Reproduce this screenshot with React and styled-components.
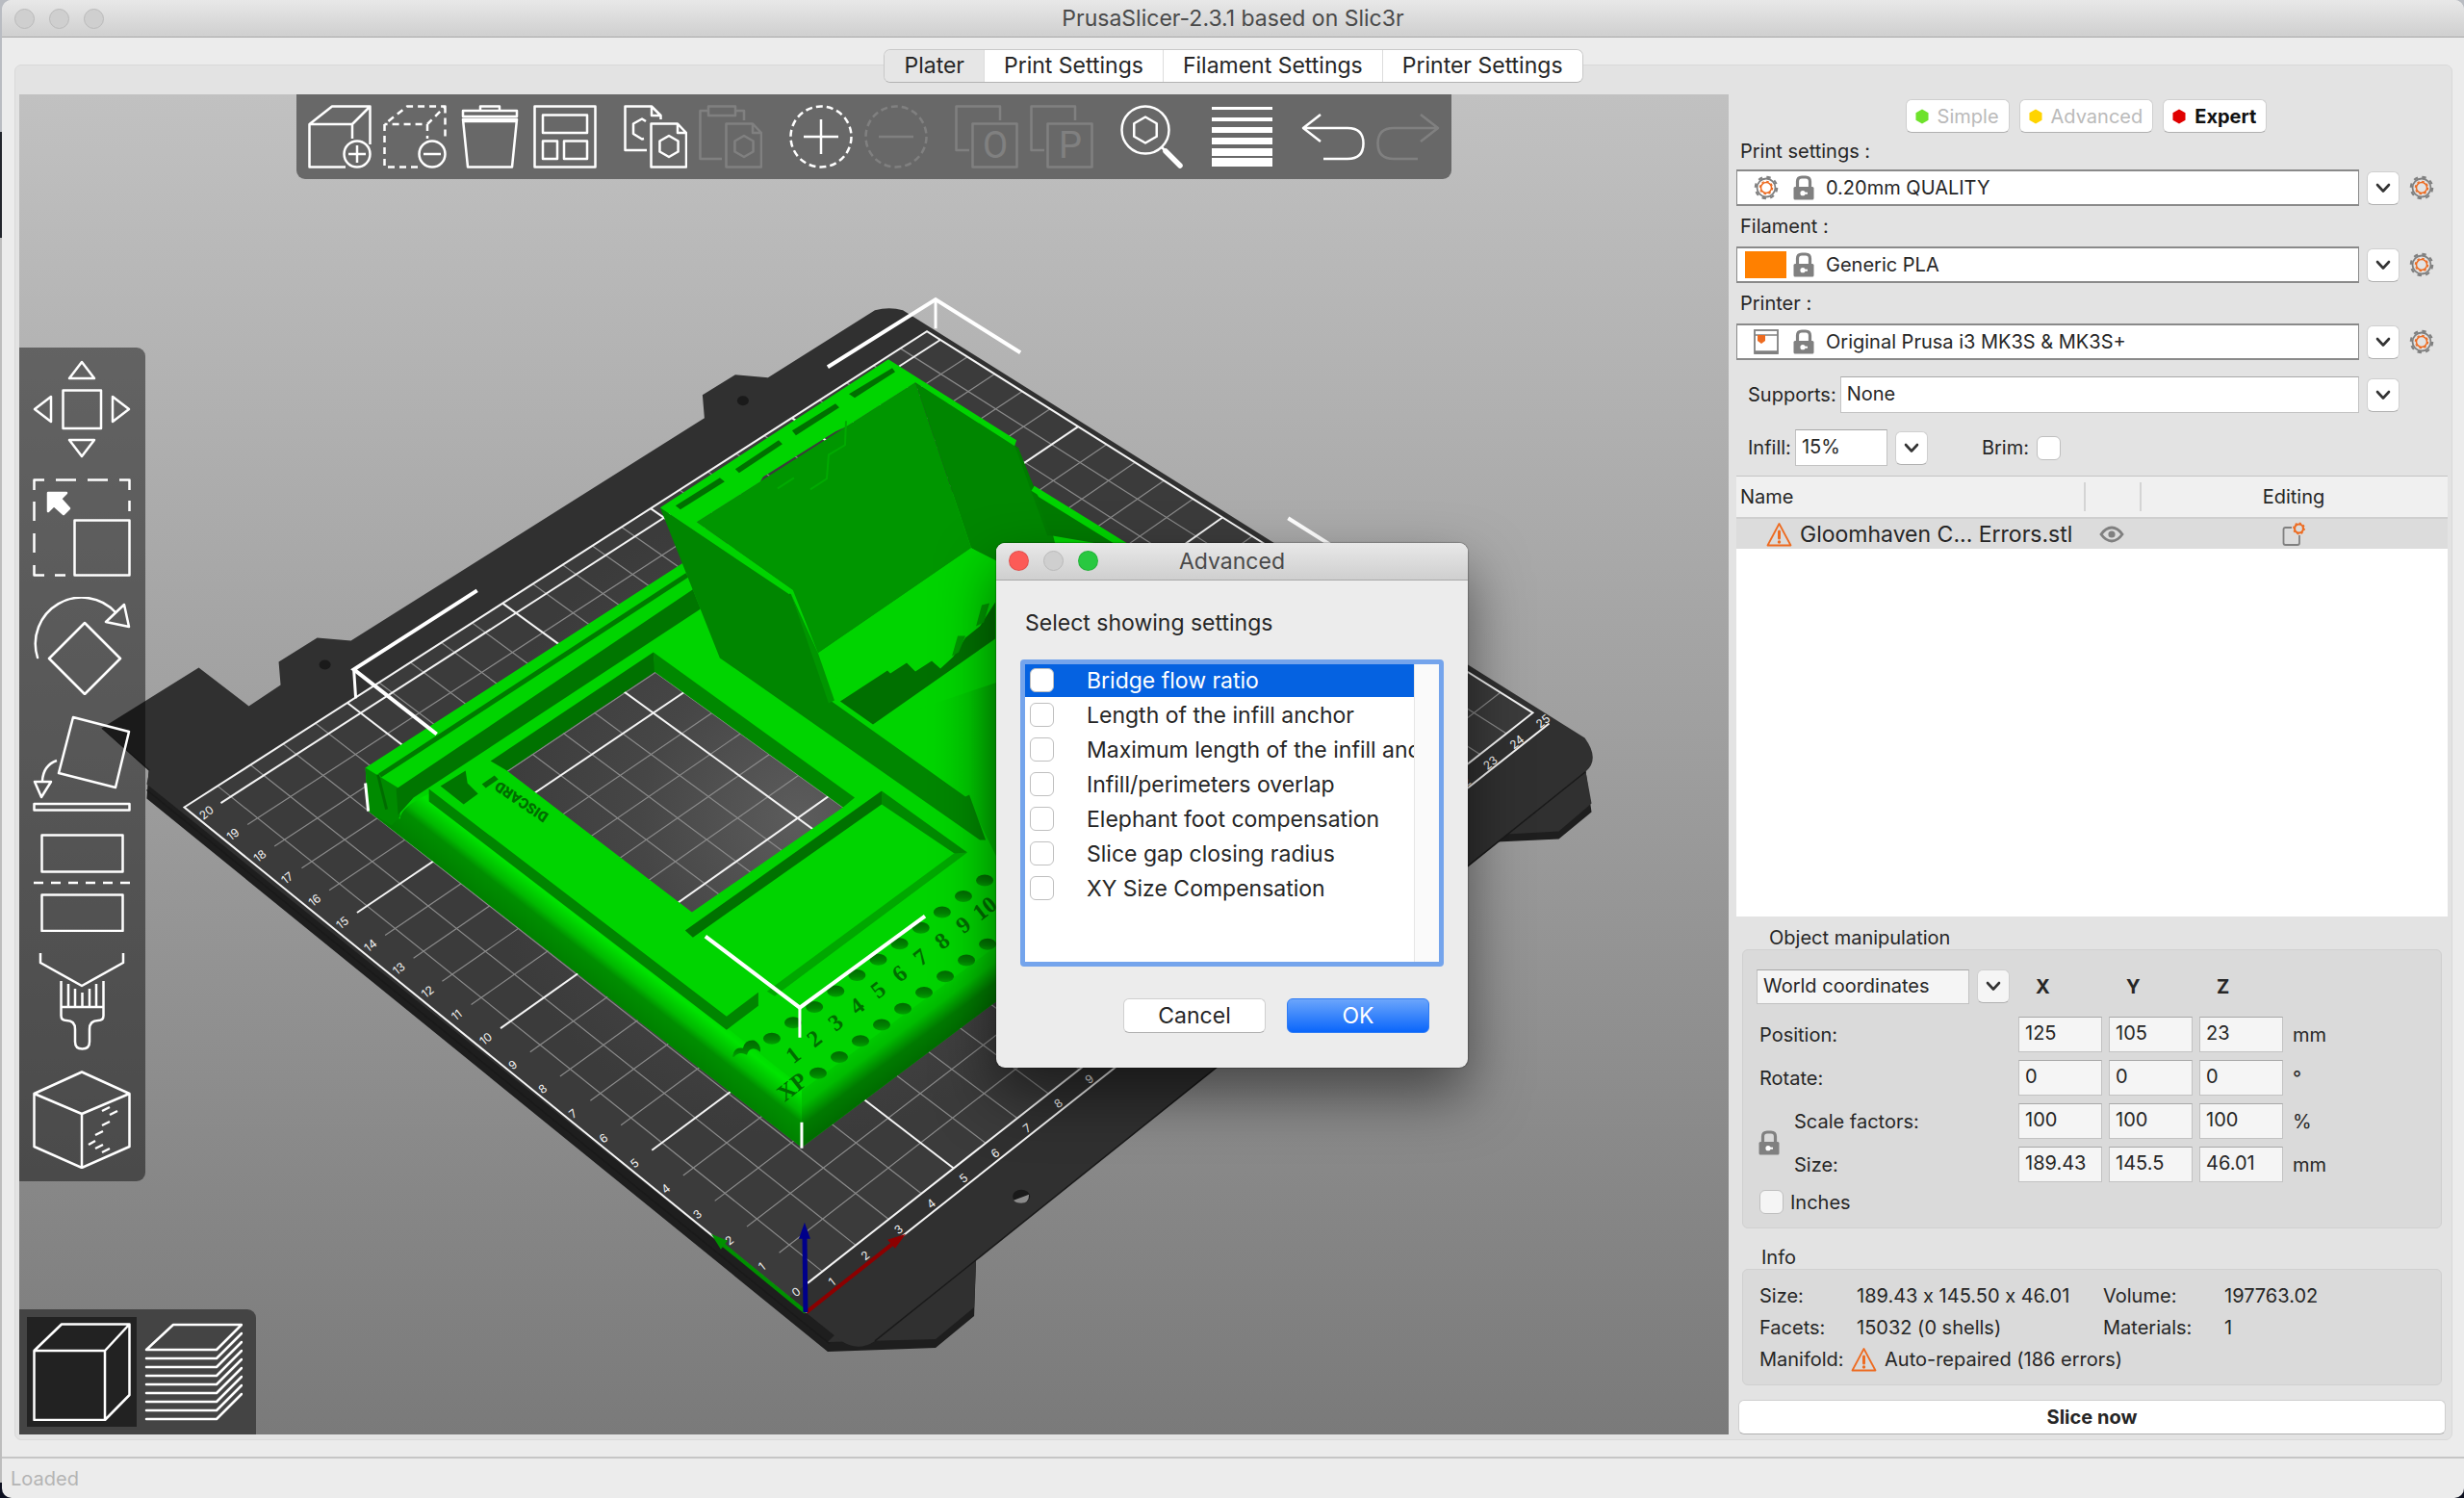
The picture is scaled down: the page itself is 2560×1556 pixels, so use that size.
import React from 'react'
import styled, { createGlobalStyle, css } from 'styled-components'

const App = () => {
  return (
    <Desktop>
      <GlobalStyle />
      <Window>
        <TitleBar>
          <Lights>
            <Light /><Light /><Light />
          </Lights>
          <Title>PrusaSlicer-2.3.1 based on Slic3r</Title>
        </TitleBar>
        <Main>
          <Tabs role="tablist">
            {TABS.map((tab, i) => (
              <Tab key={tab} role="tab" aria-selected={i === 0} $active={i === 0}>{tab}</Tab>
            ))}
          </Tabs>
          <Pane>
            <Viewport>
              <Scene />
              <TopToolbar />
              <GizmoToolbar />
              <ViewToolbar />
            </Viewport>
            <Sidebar />
          </Pane>
        </Main>
        <StatusBar>Loaded</StatusBar>
      </Window>
      <AdvancedDialog />
    </Desktop>
  )
}

export default App

const TABS = ['Plater', 'Print Settings', 'Filament Settings', 'Printer Settings']

/* ---------- sidebar ---------- */

const Sidebar = () => (
  <SideColumn>
    <Modes>
      <ModeButton><HexDot color="#6ee22b" />Simple</ModeButton>
      <ModeButton><HexDot color="#ffd400" />Advanced</ModeButton>
      <ModeButton $active><HexDot color="#e00000" />Expert</ModeButton>
    </Modes>

    <PresetLabel htmlFor="print" $first>Print settings :</PresetLabel>
    <Preset id="print" value="0.20mm QUALITY" icon={<Slot><Gear /></Slot>} />
    <PresetLabel htmlFor="filament">Filament :</PresetLabel>
    <Preset id="filament" value="Generic PLA" icon={<Swatch />} />
    <PresetLabel htmlFor="printer">Printer :</PresetLabel>
    <Preset id="printer" value="Original Prusa i3 MK3S & MK3S+" icon={<Slot><PrinterIcon /></Slot>} />

    <OptionRow>
      <label htmlFor="supports">Supports:</label>
      <Select id="supports"><option>None</option></Select>
      <ComboButton />
    </OptionRow>
    <OptionRow>
      <label htmlFor="infill">Infill:</label>
      <InfillInput id="infill" defaultValue="15%" />
      <ComboButton />
      <BrimLabel>Brim:<Check /></BrimLabel>
    </OptionRow>

    <ObjectList>
      <ObjectTable>
        <colgroup>
          <col width="361" /><col width="58" /><col />
        </colgroup>
        <thead>
          <tr><th>Name</th><th><span /></th><th><span />Editing</th></tr>
        </thead>
        <tbody>
          <tr>
            <td><ObjectName><Warning />Gloomhaven C... Errors.stl</ObjectName></td>
            <td><Eye /></td>
            <td><EditIcon /></td>
          </tr>
        </tbody>
      </ObjectTable>
    </ObjectList>

    <GroupTitle $indent={34} $height={34}>Object manipulation</GroupTitle>
    <Manipulation>
      <Coords>
        <Select aria-label="Coordinates" $tint><option>World coordinates</option></Select>
        <ComboButton $tint />
      </Coords>
      <Axis>X</Axis><Axis>Y</Axis><Axis>Z</Axis><span />
      <WideLabel>Position:</WideLabel>
      <Fields name="Position" values={['125', '105', '23']} unit="mm" />
      <WideLabel>Rotate:</WideLabel>
      <Fields name="Rotate" values={['0', '0', '0']} unit="°" />
      <LockCell><Lock /></LockCell>
      <span>Scale factors:</span>
      <Fields name="Scale" values={['100', '100', '100']} unit="%" />
      <span>Size:</span>
      <Fields name="Size" values={['189.43', '145.5', '46.01']} unit="mm" />
      <Inches><Check $tint />Inches</Inches>
    </Manipulation>

    <GroupTitle $indent={26} $height={42}>Info</GroupTitle>
    <Info>
      <InfoRow><span>Size:</span><span>189.43 x 145.50 x 46.01</span><span>Volume:</span><span>197763.02</span></InfoRow>
      <InfoRow><span>Facets:</span><span>15032 (0 shells)</span><span>Materials:</span><span>1</span></InfoRow>
      <Manifold><span>Manifold:</span><Warning />Auto-repaired (186 errors)</Manifold>
    </Info>
    <SliceButton>Slice now</SliceButton>
  </SideColumn>
)

const Preset = ({ id, value, icon }) => (
  <PresetRow>
    <PresetBox>
      {icon}
      <Lock />
      <PresetSelect id={id}><option>{value}</option></PresetSelect>
    </PresetBox>
    <ComboButton />
    <GearButton aria-label="Edit preset"><Gear /></GearButton>
  </PresetRow>
)

const Fields = ({ name, values, unit }) => (
  <>
    {values.map((v, i) => (
      <Field key={i} aria-label={`${name} ${'XYZ'[i]}`} defaultValue={v} />
    ))}
    <Unit>{unit}</Unit>
  </>
)

const ComboButton = ({ $tint }) => (
  <DropButton $tint={$tint} aria-label="Open list">
    <svg width="16" height="11" viewBox="0 0 16 11"><path d="M2 2L8 8.5L14 2" fill="none" stroke="#333" strokeWidth="2.6" strokeLinecap="round" strokeLinejoin="round" /></svg>
  </DropButton>
)

/* ---------- dialog ---------- */

const SETTINGS = [
  'Bridge flow ratio',
  'Length of the infill anchor',
  'Maximum length of the infill anchor',
  'Infill/perimeters overlap',
  'Elephant foot compensation',
  'Slice gap closing radius',
  'XY Size Compensation',
]

const AdvancedDialog = () => (
  <Overlay>
    <Dialog role="dialog" aria-label="Advanced">
      <TitleBar>
        <Lights>
          <Light $color="#fc5b57" /><Light /><Light $color="#28c840" />
        </Lights>
        <Title>Advanced</Title>
      </TitleBar>
      <DialogBody>
        <Prompt>Select showing settings</Prompt>
        <SettingsBox>
          <SettingsList>
            {SETTINGS.map((s, i) => (
              <SettingRow key={s} $selected={i === 0}><Check />{s}</SettingRow>
            ))}
          </SettingsList>
          <ScrollTrack />
        </SettingsBox>
        <DialogButtons>
          <DialogButton>Cancel</DialogButton>
          <DialogButton $primary>OK</DialogButton>
        </DialogButtons>
      </DialogBody>
    </Dialog>
  </Overlay>
)

/* ---------- toolbars ---------- */

const Icon = ({ size = 66, children, ...rest }) => (
  <svg width={size} height={size} viewBox={`0 0 ${size} ${size}`} fill="none" stroke="#fff" strokeWidth="2.5" strokeLinejoin="round" {...rest}>
    {children}
  </svg>
)

const HEX = (x, y, r) => {
  const w = r * 0.87
  return `M${x} ${y - r}L${x + w} ${y - r / 2}V${y + r / 2}L${x} ${y + r}L${x - w} ${y + r / 2}V${y - r / 2}Z`
}

const TopToolbar = () => (
  <TopBar>
    <Group>
      <Tool aria-label="Add">
        <Icon>
          <path d="M39 64.5H1.5V20L25 1.5H64.5L46 20H1.5M46 20V35M64.5 1.5V41" />
          <circle cx="51" cy="51" r="13.5" /><path d="M51 42V60M42 51H60" />
        </Icon>
      </Tool>
      <Tool aria-label="Delete">
        <Icon>
          <path d="M36 64.5H1.5V20L25 1.5H64.5L46 20H1.5M46 20V35M64.5 1.5V36" strokeDasharray="7 5" />
          <circle cx="51" cy="51" r="13.5" /><path d="M42 51H60" />
        </Icon>
      </Tool>
      <Tool aria-label="Delete all">
        <Icon>
          <path d="M23 6V1.5H43V6M5 6H61V12H5ZM5 15H61L56 64.5H10ZM6 17H60" />
        </Icon>
      </Tool>
      <Tool aria-label="Arrange">
        <Icon><path d="M1.5 1.5H64.5V64.5H1.5ZM10 10.5H56V29H10ZM10 37.5H25V56H10ZM32 37.5H56V56H32Z" /></Icon>
      </Tool>
    </Group>
    <Group>
      <Tool aria-label="Copy">
        <Icon>
          <path d="M24 47H1.5V1.5H29L38.5 11V15M29 1.5V11H38.5M21 35L19 35.5L10 30V19.5L19 14.5L23 17" />
          <path d="M28.5 19.5H56L65 29V64.5H28.5ZM56 19.5V29H65" /><path d={HEX(47, 43, 11)} />
        </Icon>
      </Tool>
      <Tool aria-label="Paste" $off disabled>
        <Icon>
          <path d="M24 56H1.5V6H10M10 1.5H38V11H10ZM38 6H47V16" />
          <path d="M28.5 19.5H56L65 29V64.5H28.5ZM56 19.5V29H65" /><path d={HEX(47, 43, 11)} />
        </Icon>
      </Tool>
    </Group>
    <Group>
      <Tool aria-label="Add instance">
        <Icon><circle cx="33" cy="33" r="31.5" strokeDasharray="7 4" /><path d="M33 15V51M15 33H51" /></Icon>
      </Tool>
      <Tool aria-label="Remove instance" $off disabled>
        <Icon><circle cx="33" cy="33" r="31.5" strokeDasharray="7 4" /><path d="M15 33H51" /></Icon>
      </Tool>
    </Group>
    <Group>
      {['O', 'P'].map((c) => (
        <Tool key={c} aria-label={c === 'O' ? 'Split to objects' : 'Split to parts'} $off disabled>
          <Icon>
            <path d="M15 47H1.5V1.5H47V16M18.5 19.5H64.5V64.5H18.5Z" />
            <text x="42" y="55" textAnchor="middle" fontSize="38" fill="#fff" stroke="none" fontFamily="Roboto">{c}</text>
          </Icon>
        </Tool>
      ))}
    </Group>
    <Group>
      <Tool aria-label="Search">
        <Icon><circle cx="26" cy="26" r="24.5" /><path d={HEX(26, 26, 13.5)} /><path d="M43 44L46 47" /><path d="M47 48L62 63" strokeWidth="5.5" strokeLinecap="round" /></Icon>
      </Tool>
    </Group>
    <Group>
      <Tool aria-label="Variable layer height">
        <Icon fill="#fff" stroke="none"><path d="M1 2h63v3H1zM1 13h63v4H1zM1 23h63v6H1zM1 34h63v7H1zM1 45h63v8H1zM1 55h63v9H1z" /></Icon>
      </Tool>
    </Group>
    <Group>
      <Tool aria-label="Undo"><Icon><path d="M20 10L2 24L20 38M2 24H48Q64.5 24 64.5 40Q64.5 56 48 56H23" /></Icon></Tool>
      <Tool aria-label="Redo" $off disabled><Icon><path d="M46 10L64 24L46 38M64 24H18Q1.5 24 1.5 40Q1.5 56 18 56H43" /></Icon></Tool>
    </Group>
  </TopBar>
)

const GIZMOS = {
  Move: <path d="M31.5 31.5H71V71H31.5ZM51 2L64 19H38ZM51 100L64 83H38ZM2 51L19 38V64ZM100 51L83 38V64Z" />,
  Scale: (
    <>
      <path d="M1.5 12V1.5H12M24 1.5H45M57 1.5H78M90 1.5H100.5V12M100.5 23V34M1.5 24V44M1.5 57V77M1.5 90V100.5H12M23 100.5H34" />
      <path d="M43.5 43.5H100.5V100.5H43.5Z" />
      <path d="M16 15H35L29 21L38 31L32 37L22 28L16 34Z" fill="#fff" />
    </>
  ),
  Rotate: (
    <>
      <path d="M5 63A48 48 0 0 1 86 16" strokeLinecap="round" />
      <path d="M95 8L76 26L100 31ZM54 27L91 64L54 101L17 64Z" />
    </>
  ),
  'Place on face': (
    <>
      <path d="M42 2L100 17L86 75L27 60ZM2 69H19L9 85ZM1.5 92H100.5V98.5H1.5Z" />
      <path d="M25 47Q11 52 10 68" />
    </>
  ),
  Cut: (
    <>
      <path d="M9.5 1.5H93.5V39.5H9.5ZM9.5 63.5H93.5V101H9.5Z" />
      <path d="M1 51H102" strokeDasharray="10 8" />
    </>
  ),
  'Paint-on supports': (
    <path d="M8 1V11L51 35L94 11V1M29.5 30V66Q29.5 71 35 71Q44 71 44 80V93Q44 100.5 51.5 100.5Q59 100.5 59 93V80Q59 71 68 71Q73.5 71 73.5 66V30M29.5 57H73.5M37 33V57M44 38V57M51.5 42V57M59 38V57M66 33V57" />
  ),
  Seam: (
    <path d="M51 1.5L100.5 24V79L51 101L1.5 79V24ZM1.5 24L51 45L100.5 24M51 45V101M72 42L80 38M80 46L88 42M72 57L80 53M65 67L73 63M58 77L65 73M65 81L73 77M72 85L80 81" />
  ),
}

const GizmoToolbar = () => (
  <GizmoBar>
    {Object.entries(GIZMOS).map(([name, art]) => (
      <Tool key={name} aria-label={name}><Icon size={102}>{art}</Icon></Tool>
    ))}
  </GizmoBar>
)

const ViewToolbar = () => (
  <ViewBar>
    <ViewButton $active aria-label="3D editor">
      <Icon size={102}><path d="M1.5 29H75V101H1.5ZM1.5 29L30 1.5H100.5L75 29M100.5 1.5V75L75 101" /></Icon>
    </ViewButton>
    <ViewButton aria-label="Preview">
      <Icon size={102} strokeLinecap="round">
        <path d="M2 28L30 2H101L75 28Z" />
        {[1, 2, 3, 4, 5, 6, 7, 8].map((i) => (
          <path key={i} d={`M2 ${28 + i * 9}H75L101 ${2 + i * 9}`} />
        ))}
      </Icon>
    </ViewButton>
  </ViewBar>
)

/* ---------- small icons ---------- */

const HexDot = ({ color }) => (
  <svg width="14" height="16" viewBox="0 0 14 16"><path d={HEX(7, 8, 7.5)} fill={color} /></svg>
)

const Gear = () => (
  <svg width="26" height="26" viewBox="0 0 26 26" fill="none">
    <circle cx="13" cy="13" r="11.2" stroke="#808080" strokeWidth="2.2" strokeDasharray="4.4 4.4" />
    <circle cx="13" cy="13" r="9.5" stroke="#808080" strokeWidth="1.8" />
    <circle cx="13" cy="13" r="5.5" stroke="#ed6b21" strokeWidth="1.5" />
    <circle cx="13" cy="13" r="6.6" stroke="#ed6b21" strokeWidth="1.2" strokeDasharray="2.6 2.6" />
  </svg>
)

const Lock = () => (
  <svg width="22" height="26" viewBox="0 0 22 26">
    <path d="M4.5 13V6.5Q4.5 2 9 2H13Q17.5 2 17.5 6.5V13" fill="none" stroke="#808080" strokeWidth="3.2" />
    <rect x="0.5" y="12" width="21" height="13.5" rx="1.5" fill="#808080" />
    <circle cx="10" cy="18.7" r="2.6" fill="#fff" /><rect x="11" y="17.7" width="4" height="2" fill="#fff" />
  </svg>
)

const PrinterIcon = () => (
  <svg width="26" height="26" viewBox="0 0 26 26" fill="none">
    <rect x="1" y="1" width="24" height="24" stroke="#808080" strokeWidth="1.8" />
    <path d="M1 6H25" stroke="#808080" strokeWidth="1.5" />
    <path d="M1 24H25" stroke="#808080" strokeWidth="3.5" />
    <path d="M4 6H12V12L8 15L4 12Z" fill="#ed6b21" />
  </svg>
)

const Warning = () => (
  <svg width="27" height="26" viewBox="0 0 27 26" fill="none">
    <path d="M13.5 2L25.5 24.5H1.5Z" stroke="#ed6b21" strokeWidth="1.8" strokeLinejoin="round" />
    <path d="M13.5 10V17" stroke="#ed6b21" strokeWidth="3" strokeLinecap="round" />
    <circle cx="13.5" cy="21" r="1.7" fill="#ed6b21" />
  </svg>
)

const Eye = () => (
  <svg width="26" height="18" viewBox="0 0 26 18" fill="none">
    <path d="M2 9Q7 2 13 2Q19 2 24 9Q19 16 13 16Q7 16 2 9Z" stroke="#808080" strokeWidth="2.8" />
    <circle cx="13" cy="9" r="3.6" fill="#808080" />
  </svg>
)

const EditIcon = () => (
  <svg width="24" height="26" viewBox="0 0 24 26" fill="none">
    <path d="M10 6H3.5Q1.5 6 1.5 8V22Q1.5 24 3.5 24H16Q18 24 18 22V14" stroke="#808080" strokeWidth="1.8" />
    <circle cx="17.5" cy="7" r="4.5" stroke="#ed6b21" strokeWidth="2.2" />
    <circle cx="17.5" cy="7" r="5.8" stroke="#ed6b21" strokeWidth="1.2" strokeDasharray="2 2.5" />
  </svg>
)

/* ---------- 3D scene ---------- */

// Projects bed coordinates (cm) to scene coordinates.
const bed = (x, y) => {
  const u = x / 25
  const v = y / 20.5
  const w = 1 + 0.1398 * u + 0.1167 * v
  return [(819 + 995.6 * u - 604.6 * v) / w, (1347 - 503.5 * u - 411.2 * v) / w]
}

const seg = (a, b) => `M${a[0]} ${a[1]}L${b[0]} ${b[1]}`
const range = (from, to) => Array.from({ length: to - from + 1 }, (_, i) => from + i)

const SLOTS = [
  '702,525 748,496 753,500 707,529',
  '764,487 809,457 813,461 768,491',
  '823,447 868,419 872,423 827,452',
  '882,409 927,382 930,386 888,413',
]

const DIGITS = ['1', '2', '3', '4', '5', '6', '7', '8', '9', '10']

const BedNumber = ({ at, children }) => (
  <text transform={`translate(${at[0]} ${at[1]}) rotate(-38)`} textAnchor="middle" dominantBaseline="central">{children}</text>
)

const Scene = () => (
  <SceneSvg viewBox="20 98 1776 1391" preserveAspectRatio="xMidYMid slice">
    <defs>
      <radialGradient id="bedLight" gradientUnits="userSpaceOnUse" cx="830" cy="850" r="330">
        <stop offset="0" stopColor="#5c5c5c" />
        <stop offset="0.5" stopColor="#464646" />
        <stop offset="1" stopColor="#3b3b3b" />
      </radialGradient>
      <linearGradient id="leftSide" gradientUnits="userSpaceOnUse" x1="600" y1="1010" x2="640" y2="959">
        <stop offset="0" stopColor="#008000" />
        <stop offset="0.33" stopColor="#008e00" />
        <stop offset="0.45" stopColor="#00b800" />
        <stop offset="0.7" stopColor="#00e400" />
        <stop offset="0.9" stopColor="#00d400" />
      </linearGradient>
      <linearGradient id="rightSide" gradientUnits="userSpaceOnUse" x1="933" y1="1116" x2="899" y2="1070">
        <stop offset="0" stopColor="#006c00" />
        <stop offset="0.3" stopColor="#007a00" />
        <stop offset="0.6" stopColor="#00bc00" />
        <stop offset="1" stopColor="#00d400" />
      </linearGradient>
      <linearGradient id="curve" gradientUnits="userSpaceOnUse" x1="970" y1="0" x2="1045" y2="0">
        <stop offset="0" stopColor="#00d400" />
        <stop offset="0.5" stopColor="#00c800" />
        <stop offset="1" stopColor="#00a400" />
      </linearGradient>
      <linearGradient id="dent" x1="0" y1="0" x2="0" y2="1">
        <stop offset="0" stopColor="#006a00" />
        <stop offset="0.6" stopColor="#008200" />
        <stop offset="1" stopColor="#00a400" />
      </linearGradient>
    </defs>

    {/* steel sheet */}
    <path fill="#1e1e1e" d="M106 756L155 800L153 829L860 1403L972 1399L1012 1366L1014 1307L1261 1110L1555 874L1619 871L1653 843L1647 801L1300 1000Z" />
    <path fill="#303030" d="M860 1393L972 1390L1012 1357L1014 1307L873 1380ZM1647 801L1653 834L1619 863L1565 866Z" />
    <path fill="#303030" d="M106 756L207 693L259 733L292 711L290 687L330 662L365 665L732 434L730 410L764 389L798 392L909 322Q924 318 938 322L1646 766Q1662 788 1647 801L1261 1110L909 1392Q891 1404 873 1391L153 814L156 799Z" />
    <path d="M1647 801L909 1392M153 820L862 1395" stroke="#1a1a1a" strokeWidth="1.5" fill="none" />
    <path fill="url(#bedLight)" d="M819 1347L192 838L963 344L1592 740L839 1332Z" />
    <ellipse cx="338" cy="690" rx="6" ry="5" fill="#1a1a1a" />
    <ellipse cx="772" cy="416" rx="6" ry="5" fill="#1a1a1a" />
    <ellipse cx="1061" cy="1242" rx="9" ry="7" fill="#191919" />
    <path d="M1053 1246L1069 1240Q1069 1249 1061 1249Q1055 1249 1053 1246Z" fill="#8a8a8a" />

    {/* grid */}
    <g stroke="#8b8b8b" strokeWidth="1.2" fill="none">
      {range(1, 24).filter((n) => n % 5).map((n) => <path key={n} d={seg(bed(n, 0), bed(n, 20.5))} />)}
      {range(1, 19).filter((n) => n % 5).map((n) => <path key={n} d={seg(bed(0.7, n), bed(25, n))} />)}
    </g>
    <g stroke="#f4f4f4" strokeWidth="2" fill="none">
      {[5, 10, 15, 20].map((n) => <path key={n} d={seg(bed(n, 0), bed(n, 20.5))} />)}
      {[5, 10, 15, 20].map((n) => <path key={n} d={seg(bed(0.7, n), bed(25, n))} />)}
      <path d="M838 1362L192 838L963 344L1592 740L839 1332M838 1362L1609 751" />
    </g>
    <g fill="#f0f0f0" fontFamily="Inter" fontSize="12">
      {range(1, 20).map((n) => <BedNumber key={n} at={bed(n < 10 ? 0.18 : 0.26, n)}>{n}</BedNumber>)}
      {range(1, 25).map((n) => <BedNumber key={n} at={bed(n - 0.05, -0.35)}>{n}</BedNumber>)}
      <BedNumber at={[827, 1341]}>0</BedNumber>
    </g>

    {/* base of the model, open in the middle */}
    <path
      fill="#00d400"
      fillRule="evenodd"
      d="M380 797L712 583L860 520L1074 505L1167 564L1280 640V900L1034 1040L833 1191L383 842ZM680 697L876 838L719 947L527 800Z"
    />
    <path fill="url(#leftSide)" d="M416 850Q416 838 446 824L833 1128V1191L383 842Z" />
    <path fill="url(#rightSide)" d="M833 1191L1280 856V800L833 1132Z" />
    <path fill="#008a00" d="M380 797L416 819V848L407 857L383 842Z" />
    <path stroke="#006c00" strokeWidth="3" d="M393 804L402 840" />
    <path stroke="#007a00" strokeWidth="5" d="M395 805L714 597" />
    <path fill="#007600" d="M412 819L720 612L728 632L430 828L414 846Z" />
    <path fill="#007200" d="M679 677L681 697L527 800L510 790Z" />
    <path fill="#008800" d="M679 677L888 828L876 838L680 697Z" />
    <path fill="#008500" d="M446 819L755 1055L788 1030V1044L755 1069L446 832Z" />
    <path fill="#007600" d="M458 816L484 800L486 813L497 824L482 835ZM501 814L514 805L518 809L505 818Z" />
    <text transform="translate(542 832) rotate(214)" textAnchor="middle" dominantBaseline="central" fill="#006c00" fontFamily="Roboto" fontWeight="900" fontSize="15">DISCARD</text>
    <path fill="#007200" d="M712 966L916 821V835L720 973Z" />
    <path fill="#008a00" d="M916 821L1005 885L993 887L916 835Z" />
    <path fill="#00a800" d="M991 886L1005 885L805 1034L797 1029Z" />
    <path fill="url(#curve)" d="M960 714L1034 663H1060V940L1006 830L907 752Z" />

    {/* card box */}
    <path fill="#008600" d="M686 527L822 617L864 728L1003 827L1007 825L1024 872L1018 872L748 683Z" />
    <path fill="#009600" d="M724 542L951 397L1009 569L850 678L824 613Z" />
    <path fill="#008600" d="M951 397L1054 462L1090 540L1110 620L1009 569Z" />
    <path fill="#007c00" d="M1054 462L1058 465L1094 556L1088 556Z" />
    <path fill="#007a00" d="M1076 514L1092 556L1150 566H1160Z" />
    <path stroke="#00d400" strokeWidth="6" d="M1073 507L1170 567" />
    <path fill="#00d400" d="M850 678L1009 569L1060 600V700L907 752Z" />
    <path fill="#009600" d="M822 617L850 678L867 727L861 730Z" />
    <path fill="#00d400" d="M686 527L923 373L1056 457L1054 463L951 397L879 443L868 448L793 495L790 500L724 542L824 613L820 617Z" />
    {SLOTS.map((p) => <polygon key={p} points={p} fill="#007000" />)}
    <path stroke="#00aa00" strokeWidth="2" fill="none" d="M879 437L878 462L861 472L859 497L842 508M825 496L808 507" />
    <path fill="#007000" d="M873 728L922 696L925 699L942 688L951 697L968 686L977 694L990 682L1003 662L1018 650L1034 625V663L907 752Z" />
    <path fill="#009600" d="M1014 650L1020 628L1028 626L1022 646ZM989 681L995 660L1003 660L996 677Z" />

    {/* dial holes and engraving */}
    <g fill="url(#dent)">
      {range(0, 10).map((i) => <ellipse key={i} cx={802 + i * 22.1} cy={1078 - i * 16.4} rx="9" ry="6" />)}
      {range(0, 8).map((i) => <ellipse key={i} cx={850 + i * 22} cy={1114 - i * 16.75} rx="9" ry="6" />)}
      <path d="M761 1097Q763 1086 772 1088Q774 1079 784 1080Q791 1084 790 1092Q780 1084 776 1095Q768 1091 763 1097Z" />
    </g>
    <g fill="#006c00" fontFamily="Liberation Serif" fontWeight="700" fontSize="24">
      {DIGITS.map((d, i) => (
        <text key={d} transform={`translate(${824 + i * 22.1} ${1095 - i * 16.9}) rotate(-38)`} textAnchor="middle" dominantBaseline="central">{d}</text>
      ))}
      <text transform="translate(823 1128) rotate(-38)" textAnchor="middle" dominantBaseline="central">XP</text>
    </g>

    {/* selection box */}
    <g stroke="#fff" strokeWidth="4" fill="none">
      <path d="M860 381L972 311L1060 366M496 613L368 695L454 762M1338 538L1400 577M733 972L831 1046L961 951" />
      <path d="M972 311V341M368 695L370 725M831 1046V1077M833 1165V1192M380 813L383 842" strokeWidth="3" />
    </g>

    {/* axes */}
    <path d="M837 1362L750 1291" stroke="#009000" strokeWidth="4" />
    <path d="M739 1281L756 1288L749 1297Z" fill="#009000" />
    <path d="M838 1362L930 1289" stroke="#8c0000" strokeWidth="4" />
    <path d="M941 1281L930 1296L922 1287Z" fill="#8c0000" />
    <path d="M837 1362L836 1280" stroke="#00008a" strokeWidth="5" />
    <path d="M836 1269L842 1286H830Z" fill="#00008a" />
  </SceneSvg>
)

/* ---------- styles ---------- */

const GlobalStyle = createGlobalStyle`
  * {
    box-sizing: border-box;
  }

  body {
    margin: 0;
    font-family: Inter, 'Liberation Sans', sans-serif;
    font-size: 20px;
    font-optical-sizing: none;
    font-feature-settings: 'calt' 0;
    color: #262626;
  }

  button, input, select {
    margin: 0;
    font-family: inherit;
    font-size: inherit;
    color: inherit;
  }

  svg {
    display: block;
    flex: none;
  }
`

const Desktop = styled.div`
  position: relative;
  min-height: 100vh;
  display: flex;
  padding-left: 2px;
  background: linear-gradient(#b9bcc2 137px, #22252c 137px, #22252c 247px, #bdbdbd 247px, #bdbdbd 1540px, #0d1020 1540px);
`

const Window = styled.div`
  flex: 1;
  display: flex;
  flex-direction: column;
  background: #ececec;
  border-radius: 10px;
  overflow: hidden;
`

const TitleBar = styled.header`
  height: 39px;
  flex: none;
  display: grid;
  grid-template-columns: 1fr auto 1fr;
  align-items: center;
  padding: 0 13px;
  background: linear-gradient(#e8e8e8, #cfcfcf);
  border-bottom: 1px solid #a9a9a9;
`

const Lights = styled.div`
  display: flex;
  gap: 15px;
`

const Light = styled.span`
  width: 21px;
  height: 21px;
  border-radius: 50%;
  border: 1px solid ${(p) => (p.$color ? 'rgba(0, 0, 0, 0.1)' : '#b9b9b9')};
  background: ${(p) => p.$color || '#cfcfcf'};
`

const Title = styled.div`
  font-size: 23px;
  line-height: 28px;
  color: #4a4a4a;
`

const Main = styled.main`
  flex: 1;
  display: flex;
  flex-direction: column;
  padding: 12px 12px 17px 13px;
`

const Tabs = styled.div`
  align-self: center;
  z-index: 1;
  display: flex;
  height: 35px;
  margin-bottom: -19px;
  border: 1px solid #c9c9c9;
  border-bottom-color: #b3b3b3;
  border-radius: 7px;
  overflow: hidden;
`

const Tab = styled.button`
  border: 0;
  border-right: 1px solid #dcdcdc;
  padding: 0 20px 1px;
  font-size: 23px;
  line-height: 28px;
  background: ${(p) => (p.$active ? '#e6e6e6' : '#fff')};

  &:last-child {
    border-right: 0;
  }
`

const Pane = styled.section`
  flex: 1;
  display: flex;
  padding: 30px 0 5px 4px;
  background: #e3e3e3;
  border: 1px solid #d9d9d9;
  border-radius: 7px;
`

const Viewport = styled.div`
  flex: 1;
  position: relative;
  overflow: hidden;
  background: linear-gradient(#c1c1c1, #7a7a7a);
`

const SceneSvg = styled.svg`
  position: absolute;
  inset: 0;
  width: 100%;
  height: 100%;
`

const TopBar = styled.div`
  position: absolute;
  top: 0;
  left: 50%;
  transform: translateX(-50%);
  display: flex;
  gap: 28px;
  padding: 11px 12px;
  border-radius: 0 0 9px 9px;
  background: #686868;
`

const Group = styled.div`
  display: flex;
  gap: 12px;
`

const Tool = styled.button`
  border: 0;
  padding: 0;
  background: none;
  opacity: ${(p) => (p.$off ? 0.16 : 1)};
`

const GizmoBar = styled.div`
  position: absolute;
  left: 0;
  top: 50%;
  transform: translateY(-50%);
  display: flex;
  flex-direction: column;
  gap: 21px;
  padding: 13px 15px 13px 14px;
  border-radius: 0 9px 9px 0;
  background: rgba(0, 0, 0, 0.45);
`

const ViewBar = styled.div`
  position: absolute;
  left: 0;
  bottom: 0;
  display: flex;
  gap: 2px;
  padding: 8px;
  border-radius: 0 9px 0 0;
  background: #444;
`

const ViewButton = styled.button`
  border: 0;
  padding: 6px;
  background: ${(p) => (p.$active ? '#222' : 'none')};
`

const StatusBar = styled.footer`
  height: 43px;
  flex: none;
  display: flex;
  align-items: center;
  padding-left: 9px;
  border-top: 2px solid #c6c6c6;
  color: #b4b4b4;
`

const SideColumn = styled.aside`
  width: 751px;
  flex: none;
  display: flex;
  flex-direction: column;
  padding: 5px 4px 0 8px;
`

const raised = css`
  border: 1px solid #cfcfcf;
  border-bottom-color: #b0b0b0;
  border-radius: 6px;
  background: ${(p) => (p.$tint ? '#f5f5f5' : '#fff')};
`

const Modes = styled.div`
  display: flex;
  justify-content: center;
  gap: 10px;
  padding-right: 12px;
`

const ModeButton = styled.button`
  ${raised}
  height: 35px;
  display: flex;
  align-items: center;
  gap: 9px;
  padding: 0 10px 0 9px;
  color: ${(p) => (p.$active ? '#111' : '#bababa')};
  font-weight: ${(p) => (p.$active ? 700 : 400)};
`

const PresetLabel = styled.label`
  height: ${(p) => (p.$first ? 38 : 42)}px;
  display: flex;
  align-items: center;
  padding-left: 4px;
`

const PresetRow = styled.div`
  display: flex;
  align-items: center;
  gap: 8px;
`

const PresetBox = styled.div`
  flex: 1;
  height: 38px;
  display: flex;
  align-items: center;
  gap: 7px;
  padding-left: 8px;
  border: 2px solid #8a8a8a;
  border-width: 2px 1px;
  background: #fff;
`

const Slot = styled.span`
  width: 43px;
  display: flex;
  justify-content: center;
`

const Swatch = styled.span`
  width: 43px;
  height: 28px;
  background: #ff8000;
`

const PresetSelect = styled.select`
  appearance: none;
  flex: 1;
  border: 0;
  padding: 0 5px;
  background: none;
`

const DropButton = styled.button`
  ${raised}
  width: 34px;
  height: 35px;
  flex: none;
  display: flex;
  align-items: center;
  justify-content: center;
  padding: 0;
`

const GearButton = styled.button`
  width: 42px;
  border: 0;
  padding: 0 0 0 2px;
  background: none;
`

const OptionRow = styled.div`
  display: flex;
  align-items: center;
  gap: 8px;
  height: 38px;
  margin-top: 17px;
  padding: 0 50px 0 12px;

  & > label:first-child {
    margin-right: -4px;
  }
`

const sunken = css`
  border: 1px solid #c2c2c2;
  border-top-color: #a8a8a8;
  border-radius: 0;
  padding: 0 6px 3px;
`

const Select = styled.select`
  ${sunken}
  appearance: none;
  height: 100%;
  flex: 1;
  background: ${(p) => (p.$tint ? '#f5f5f5' : '#fff')};
`

const InfillInput = styled.input`
  ${sunken}
  width: 96px;
  height: 100%;
  background: #fff;
`

const BrimLabel = styled.label`
  display: flex;
  align-items: center;
  gap: 8px;
  margin-left: 48px;
`

const Check = styled.input.attrs({ type: 'checkbox' })`
  ${raised}
  appearance: none;
  width: 25px;
  height: 25px;
  flex: none;
  border-color: #bfbfbf;
`

const ObjectList = styled.div`
  flex: 1;
  margin-top: 10px;
  border-top: 1px solid #c4c4c4;
  background: #fff;
`

const ObjectTable = styled.table`
  width: 100%;
  table-layout: fixed;
  border-collapse: collapse;

  th {
    height: 43px;
    padding: 0 4px;
    background: #f0f0f0;
    border-bottom: 2px solid #cfcfcf;
    font-weight: 400;
  }

  th:first-child {
    text-align: left;
  }

  th span {
    float: left;
    height: 30px;
    margin: 0 0 0 -4px;
    border-left: 2px solid #d4d4d4;
  }

  th:last-child {
    line-height: 30px;
  }

  td {
    height: 32px;
    padding: 1px 0 0;
    background: #dcdcdc;
  }

  td > svg {
    margin: 0 auto;
  }
`

const ObjectName = styled.div`
  display: flex;
  align-items: center;
  gap: 8px;
  padding-left: 31px;
  font-size: 23px;
  white-space: nowrap;
`

const GroupTitle = styled.h3`
  height: ${(p) => p.$height}px;
  margin: 0;
  padding: 0 0 0 ${(p) => p.$indent}px;
  display: flex;
  align-items: flex-end;
  line-height: 24px;
  font-size: 20px;
  font-weight: 400;
`

const box = css`
  margin: 0 6px;
  border: 1px solid #d0d0d0;
  border-radius: 6px;
  background: #dadada;
`

const Manipulation = styled.div`
  ${box}
  display: grid;
  grid-template-columns: 32px 226px 87px 87px 87px 1fr;
  gap: 8px 7px;
  align-items: center;
  padding: 20px 14px 14px;
`

const Coords = styled.div`
  grid-column: span 2;
  display: flex;
  gap: 8px;
  height: 36px;
  margin-bottom: 5px;
  padding-right: 2px;
`

const Axis = styled.b`
  padding: 0 0 5px 18px;
`

const WideLabel = styled.span`
  grid-column: span 2;
  padding-left: 3px;
`

const Field = styled.input`
  ${sunken}
  width: 100%;
  height: 37px;
  background: #f5f5f5;
`

const Unit = styled.span`
  padding-left: 3px;
`

const LockCell = styled.div`
  grid-row: span 2;
  padding-left: 2px;
`

const Inches = styled.label`
  grid-column: 1 / -1;
  display: flex;
  align-items: center;
  gap: 7px;
  padding-left: 3px;
`

const Info = styled.div`
  ${box}
  padding: 10px 17px;
`

const InfoRow = styled.div`
  display: grid;
  grid-template-columns: 101px 256px 126px 1fr;
  align-items: center;
  height: 33px;
`

const Manifold = styled.div`
  display: flex;
  align-items: center;
  gap: 8px;
  height: 33px;

  span {
    width: 87px;
  }
`

const SliceButton = styled.button`
  ${raised}
  height: 36px;
  margin: 15px 2px 0;
  font-weight: 700;
`

const Overlay = styled.div`
  position: absolute;
  inset: 0;
  display: flex;
  justify-content: center;
  align-items: center;
  padding-top: 116px;
`

const Dialog = styled.section`
  width: 490px;
  border-radius: 9px;
  overflow: hidden;
  background: #ececec;
  box-shadow: 0 0 1px 1px rgba(0, 0, 0, 0.2), 0 28px 60px rgba(0, 0, 0, 0.5);
`

const DialogBody = styled.div`
  display: flex;
  flex-direction: column;
  padding: 30px 25px 36px;
`

const Prompt = styled.div`
  padding: 0 5px;
  font-size: 23px;
  line-height: 28px;
`

const SettingsBox = styled.div`
  display: flex;
  height: 319px;
  margin-top: 24px;
  border: 5px solid #74a4ec;
  border-radius: 4px;
  background: #fff;
`

const SettingsList = styled.div`
  flex: 1;
  display: flex;
  flex-direction: column;
  gap: 2px;
  overflow: hidden;
`

const SettingRow = styled.label`
  display: flex;
  align-items: center;
  gap: 34px;
  height: 34px;
  flex: none;
  padding-left: 5px;
  font-size: 23px;
  white-space: nowrap;
  color: ${(p) => (p.$selected ? '#fff' : 'inherit')};
  background: ${(p) => (p.$selected ? '#0562e1' : 'none')};
`

const ScrollTrack = styled.div`
  width: 26px;
  border-left: 1px solid #e6e6e6;
  background: #fafafa;
`

const DialogButtons = styled.div`
  display: flex;
  justify-content: flex-end;
  gap: 22px;
  margin-top: 33px;
  padding-right: 15px;
`

const DialogButton = styled.button`
  ${raised}
  width: 148px;
  height: 36px;
  font-size: 23px;
  line-height: 28px;
  ${(p) => p.$primary && css`
    border-color: #2f7cf5;
    background: linear-gradient(#6ba5fb, #0a66fb);
    color: #fff;
  `}
`
